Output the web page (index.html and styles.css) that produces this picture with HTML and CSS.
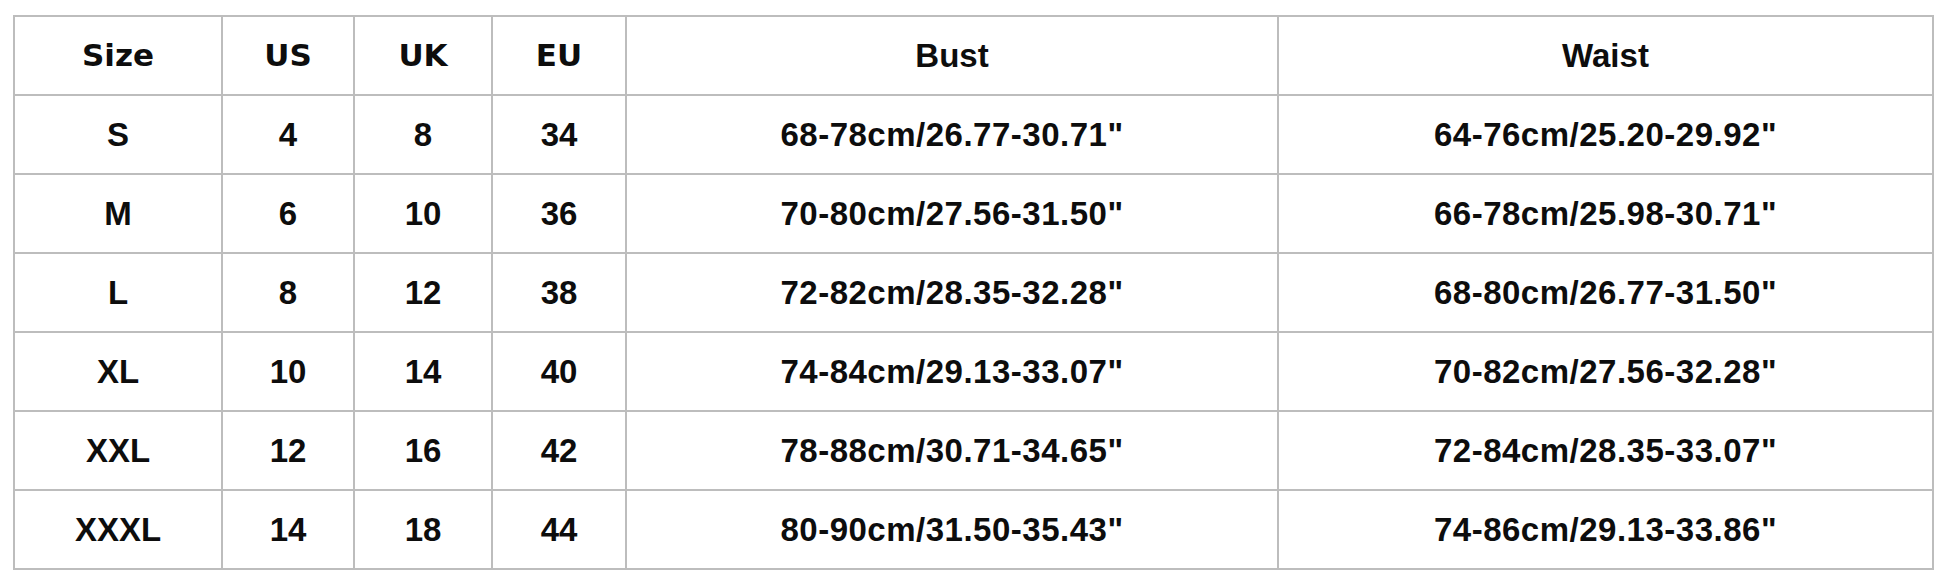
FILE: index.html
```html
<!DOCTYPE html>
<html lang="en">
<head>
<meta charset="utf-8">
<title>Size Chart</title>
<link rel="stylesheet" href="styles.css">
</head>
<body>
<table class="chart">
  <colgroup>
    <col class="c-size"><col class="c-us"><col class="c-uk"><col class="c-eu"><col class="c-bust"><col class="c-waist">
  </colgroup>
  <thead>
    <tr>
      <th class="hv">Size</th><th class="hv">US</th><th class="hv">UK</th><th class="hv">EU</th><th>Bust</th><th>Waist</th>
    </tr>
  </thead>
  <tbody>
    <tr><td>S</td><td>4</td><td>8</td><td>34</td><td class="m">68-78cm/26.77-30.71"</td><td class="m">64-76cm/25.20-29.92"</td></tr>
    <tr><td>M</td><td>6</td><td>10</td><td>36</td><td class="m">70-80cm/27.56-31.50"</td><td class="m">66-78cm/25.98-30.71"</td></tr>
    <tr><td>L</td><td>8</td><td>12</td><td>38</td><td class="m">72-82cm/28.35-32.28"</td><td class="m">68-80cm/26.77-31.50"</td></tr>
    <tr><td>XL</td><td>10</td><td>14</td><td>40</td><td class="m">74-84cm/29.13-33.07"</td><td class="m">70-82cm/27.56-32.28"</td></tr>
    <tr><td>XXL</td><td>12</td><td>16</td><td>42</td><td class="m">78-88cm/30.71-34.65"</td><td class="m">72-84cm/28.35-33.07"</td></tr>
    <tr><td>XXXL</td><td>14</td><td>18</td><td>44</td><td class="m">80-90cm/31.50-35.43"</td><td class="m">74-86cm/29.13-33.86"</td></tr>
  </tbody>
</table>
</body>
</html>
```
FILE: styles.css
```css
html, body {
  margin: 0;
  background: #ffffff;
}
body {
  padding: 15px 0 0 13px;
  font-family: "Liberation Sans", Arial, sans-serif;
  color: #0d0d0d;
}
.chart {
  width: 1919px;
  table-layout: fixed;
  border-collapse: collapse;
  border: 2px solid #969696;
}
.c-size { width: 208px; }
.c-us { width: 132px; }
.c-uk { width: 138px; }
.c-eu { width: 134px; }
.c-bust { width: 652px; }
.c-waist { width: 655px; }
.chart th,
.chart td {
  height: 77px;
  padding: 0;
  border: 2px solid #bdbdbd;
  text-align: center;
  vertical-align: middle;
  font-weight: bold;
  font-size: 33px;
  line-height: 1;
}
.chart th.hv {
  font-family: "DejaVu Sans", Verdana, sans-serif;
  font-size: 31px;
}
.chart td.m {
  letter-spacing: 0.5px;
}
```
